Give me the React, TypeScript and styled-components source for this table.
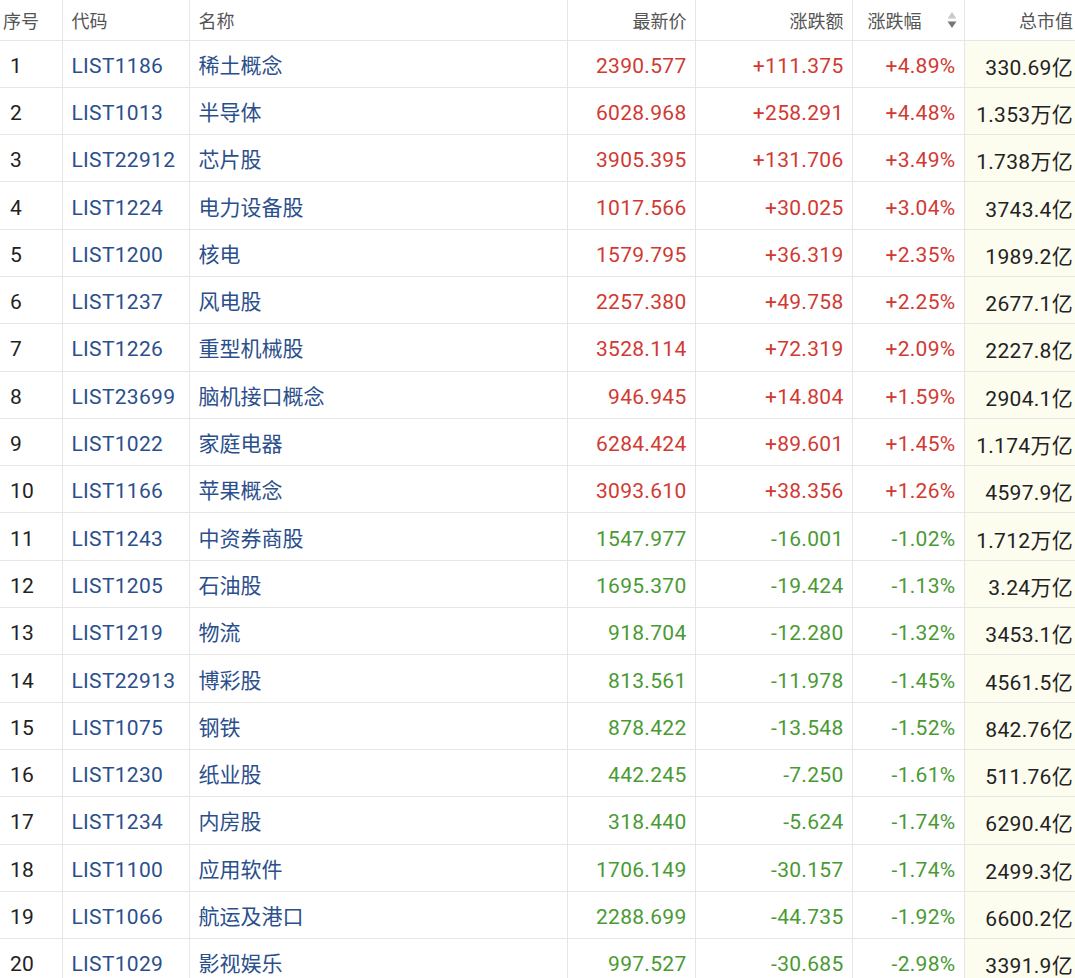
import React from "react";
import styled, { createGlobalStyle } from "styled-components";

type Row = {
  code: string;
  name: string;
  price: string;
  change: string;
  pct: string;
  cap: string;
};

const rows: Row[] = [
  { code: "LIST1186", name: "稀土概念", price: "2390.577", change: "+111.375", pct: "+4.89%", cap: "330.69亿" },
  { code: "LIST1013", name: "半导体", price: "6028.968", change: "+258.291", pct: "+4.48%", cap: "1.353万亿" },
  { code: "LIST22912", name: "芯片股", price: "3905.395", change: "+131.706", pct: "+3.49%", cap: "1.738万亿" },
  { code: "LIST1224", name: "电力设备股", price: "1017.566", change: "+30.025", pct: "+3.04%", cap: "3743.4亿" },
  { code: "LIST1200", name: "核电", price: "1579.795", change: "+36.319", pct: "+2.35%", cap: "1989.2亿" },
  { code: "LIST1237", name: "风电股", price: "2257.380", change: "+49.758", pct: "+2.25%", cap: "2677.1亿" },
  { code: "LIST1226", name: "重型机械股", price: "3528.114", change: "+72.319", pct: "+2.09%", cap: "2227.8亿" },
  { code: "LIST23699", name: "脑机接口概念", price: "946.945", change: "+14.804", pct: "+1.59%", cap: "2904.1亿" },
  { code: "LIST1022", name: "家庭电器", price: "6284.424", change: "+89.601", pct: "+1.45%", cap: "1.174万亿" },
  { code: "LIST1166", name: "苹果概念", price: "3093.610", change: "+38.356", pct: "+1.26%", cap: "4597.9亿" },
  { code: "LIST1243", name: "中资券商股", price: "1547.977", change: "-16.001", pct: "-1.02%", cap: "1.712万亿" },
  { code: "LIST1205", name: "石油股", price: "1695.370", change: "-19.424", pct: "-1.13%", cap: "3.24万亿" },
  { code: "LIST1219", name: "物流", price: "918.704", change: "-12.280", pct: "-1.32%", cap: "3453.1亿" },
  { code: "LIST22913", name: "博彩股", price: "813.561", change: "-11.978", pct: "-1.45%", cap: "4561.5亿" },
  { code: "LIST1075", name: "钢铁", price: "878.422", change: "-13.548", pct: "-1.52%", cap: "842.76亿" },
  { code: "LIST1230", name: "纸业股", price: "442.245", change: "-7.250", pct: "-1.61%", cap: "511.76亿" },
  { code: "LIST1234", name: "内房股", price: "318.440", change: "-5.624", pct: "-1.74%", cap: "6290.4亿" },
  { code: "LIST1100", name: "应用软件", price: "1706.149", change: "-30.157", pct: "-1.74%", cap: "2499.3亿" },
  { code: "LIST1066", name: "航运及港口", price: "2288.699", change: "-44.735", pct: "-1.92%", cap: "6600.2亿" },
  { code: "LIST1029", name: "影视娱乐", price: "997.527", change: "-30.685", pct: "-2.98%", cap: "3391.9亿" },
];

const GlobalStyle = createGlobalStyle`
  html, body {
    margin: 0;
    padding: 0;
    background: #fff;
    overflow: hidden;
  }
  body {
    font-family: Roboto, "Noto Sans CJK SC", sans-serif;
  }
`;

const Table = styled.table`
  width: 1075px;
  table-layout: fixed;
  border-collapse: collapse;
  color: #222;
`;

const HeadCell = styled.th<{ $align?: "left" | "right"; $pad?: number; $padRight?: number }>`
  height: 40px;
  box-sizing: border-box;
  padding: 0 ${(p) => p.$padRight ?? 8}px 0 ${(p) => p.$pad ?? 9}px;
  font-size: 18px;
  font-weight: 400;
  color: #555;
  text-align: ${(p) => p.$align ?? "left"};
  border-bottom: 1px solid #e6e6e6;
  border-right: 1px solid #e6e6e6;
  vertical-align: middle;
  white-space: nowrap;
  &:last-child {
    border-right: none;
    padding-right: 2px;
  }
`;

const SortHead = styled.div`
  display: flex;
  align-items: center;
  justify-content: space-between;
`;

type Tone = "up" | "down" | "link" | "plain";

const toneColor: Record<Tone, string> = {
  up: "#d03a32",
  down: "#4a9a34",
  link: "#2b4f8c",
  plain: "#222",
};

const Cell = styled.td<{
  $align?: "left" | "right";
  $tone?: Tone;
  $cap?: boolean;
  $cjk?: boolean;
  $padLeft?: number;
}>`
  height: 47.3px;
  box-sizing: border-box;
  padding: ${(p) => (p.$cjk ? "0" : "4px")} 8px 0 ${(p) => p.$padLeft ?? 9}px;
  font-size: 21px;
  font-weight: 400;
  letter-spacing: ${(p) => (p.$cjk ? "0" : "0.3px")};
  text-align: ${(p) => p.$align ?? "left"};
  color: ${(p) => toneColor[p.$tone ?? "plain"]};
  background: ${(p) => (p.$cap ? "#fcfcef" : "transparent")};
  border-bottom: 1px solid #e6e6e6;
  border-right: 1px solid #e6e6e6;
  vertical-align: middle;
  white-space: nowrap;
  &:last-child {
    border-right: none;
    padding-right: 2px;
  }
`;

const SortIcon = () => (
  <svg width="10" height="18" viewBox="0 0 10 18">
    <path d="M5 1 L9.5 7.5 L0.5 7.5 Z" fill="#c9c9c9" />
    <path d="M0.5 10.5 L9.5 10.5 L5 17 Z" fill="#777" />
  </svg>
);

export default function App() {
  return (
    <>
      <GlobalStyle />
      <Table>
        <colgroup>
          <col style={{ width: 62 }} />
          <col style={{ width: 127 }} />
          <col style={{ width: 378 }} />
          <col style={{ width: 128 }} />
          <col style={{ width: 157 }} />
          <col style={{ width: 112 }} />
          <col style={{ width: 111 }} />
        </colgroup>
        <thead>
          <tr>
            <HeadCell $pad={3}>序号</HeadCell>
            <HeadCell>代码</HeadCell>
            <HeadCell>名称</HeadCell>
            <HeadCell $align="right">最新价</HeadCell>
            <HeadCell $align="right">涨跌额</HeadCell>
            <HeadCell $pad={15} $padRight={7}>
              <SortHead>
                <span>涨跌幅</span>
                <SortIcon />
              </SortHead>
            </HeadCell>
            <HeadCell $align="right">总市值</HeadCell>
          </tr>
        </thead>
        <tbody>
          {rows.map((r, i) => {
            const tone: Tone = r.change.startsWith("-") ? "down" : "up";
            return (
              <tr key={r.code}>
                <Cell $padLeft={10}>{i + 1}</Cell>
                <Cell $tone="link">{r.code}</Cell>
                <Cell $tone="link" $cjk>
                  {r.name}
                </Cell>
                <Cell $align="right" $tone={tone}>
                  {r.price}
                </Cell>
                <Cell $align="right" $tone={tone}>
                  {r.change}
                </Cell>
                <Cell $align="right" $tone={tone}>
                  {r.pct}
                </Cell>
                <Cell $align="right" $cap>
                  {r.cap}
                </Cell>
              </tr>
            );
          })}
        </tbody>
      </Table>
    </>
  );
}
